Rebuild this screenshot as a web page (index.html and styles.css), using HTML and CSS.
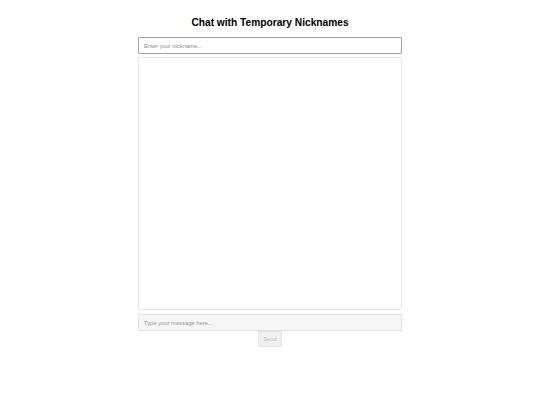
FILE: index.html
```html
<!DOCTYPE html>
<html lang="en">
<head>
<meta charset="utf-8">
<title>Chat with Temporary Nicknames</title>
<link rel="stylesheet" href="styles.css">
</head>
<body>
<div class="app">
  <h1 class="title">Chat with Temporary Nicknames</h1>
  <input class="nick" type="text" placeholder="Enter your nickname...">
  <div class="messages"></div>
  <input class="msg" type="text" placeholder="Type your message here..." disabled>
  <button class="send" disabled>Send</button>
</div>
</body>
</html>
```
FILE: styles.css
```css
html, body {
  margin: 0;
  padding: 0;
  background: #fff;
}
body {
  font-family: "Liberation Sans", Arial, sans-serif;
}
.app {
  width: 264px;
  margin: 0 auto;
  padding-top: 16px;
  display: flex;
  flex-direction: column;
  align-items: center;
}
.title {
  margin: 0 0 7px 0;
  font-size: 10.2px;
  line-height: 14px;
  font-weight: bold;
  color: #000;
}
.nick, .msg {
  box-sizing: border-box;
  width: 264px;
  height: 17px;
  margin: 0;
  padding: 0 5px;
  font-family: "Liberation Sans", Arial, sans-serif;
  font-size: 5.8px;
  outline: none;
}
.nick {
  border: 1px solid #a3a3a3;
  border-radius: 1px;
  background: #fff;
}
.nick::placeholder { color: #8c8c8c; }
.messages {
  box-sizing: border-box;
  width: 264px;
  height: 253px;
  margin-top: 3px;
  border: 1px solid #e6e6e6;
  border-radius: 2px;
  background: #fff;
}
.msg {
  margin-top: 4px;
  border: 1px solid #e0e0e0;
  border-radius: 1px;
  background: #f6f6f6;
}
.msg::placeholder { color: #959595; }
.send {
  box-sizing: border-box;
  width: 24px;
  height: 16px;
  margin: 0;
  padding: 0;
  border: 1px solid #e4e4e4;
  border-radius: 1px;
  background: #f0f0f0;
  color: #bcbcbc;
  font-family: "Liberation Sans", Arial, sans-serif;
  font-size: 5.8px;
}
```
